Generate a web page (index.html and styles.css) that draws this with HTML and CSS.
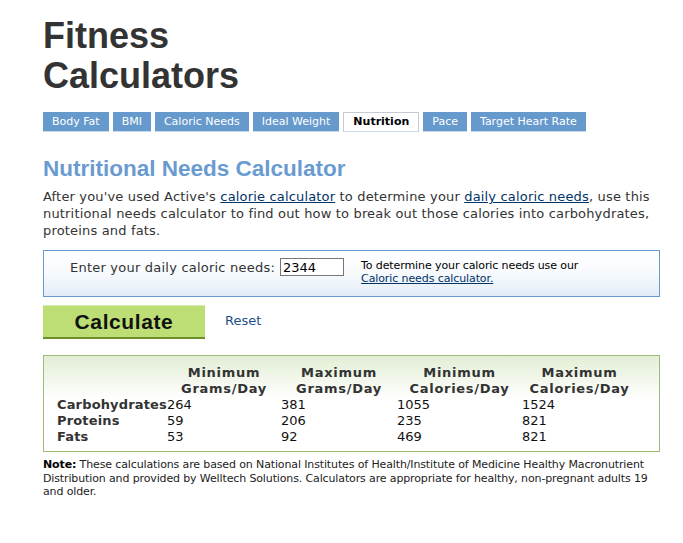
FILE: index.html
```html
<!DOCTYPE html>
<html>
<head>
<meta charset="utf-8">
<title>Fitness Calculators</title>
<link rel="stylesheet" href="styles.css">
</head>
<body>
<div class="page">
  <h1 class="title">Fitness<br>Calculators</h1>
  <ul class="tabs">
    <li class="tab">Body Fat</li>
    <li class="tab">BMI</li>
    <li class="tab">Caloric Needs</li>
    <li class="tab">Ideal Weight</li>
    <li class="tab active">Nutrition</li>
    <li class="tab">Pace</li>
    <li class="tab">Target Heart Rate</li>
  </ul>
  <h2 class="heading">Nutritional Needs Calculator</h2>
  <p class="intro">After you've used Active's <a href="#">calorie calculator</a> to determine your <a href="#">daily caloric needs</a>, use this nutritional needs calculator to find out how to break out those calories into carbohydrates, proteins and fats.</p>
  <div class="input-box">
    <label class="input-label">Enter your daily caloric needs:</label>
    <input class="cal-input" type="text" value="2344">
    <div class="hint">To determine your caloric needs use our<br><a href="#">Caloric needs calculator.</a></div>
  </div>
  <div class="actions">
    <button class="calc-btn">Calculate</button>
    <a class="reset" href="#">Reset</a>
  </div>
  <div class="results">
    <table class="res-table">
      <colgroup>
        <col class="c1"><col class="c2"><col class="c3"><col class="c4"><col class="c5">
      </colgroup>
      <tr class="head">
        <th></th>
        <th>Minimum<br>Grams/Day</th>
        <th>Maximum<br>Grams/Day</th>
        <th>Minimum<br>Calories/Day</th>
        <th>Maximum<br>Calories/Day</th>
      </tr>
      <tr><th class="rowh">Carbohydrates</th><td>264</td><td>381</td><td>1055</td><td>1524</td></tr>
      <tr><th class="rowh">Proteins</th><td>59</td><td>206</td><td>235</td><td>821</td></tr>
      <tr><th class="rowh">Fats</th><td>53</td><td>92</td><td>469</td><td>821</td></tr>
    </table>
  </div>
  <p class="note"><b>Note:</b> These calculations are based on National Institutes of Health/Institute of Medicine Healthy Macronutrient Distribution and provided by Welltech Solutions. Calculators are appropriate for healthy, non-pregnant adults 19 and older.</p>
</div>
</body>
</html>
```
FILE: styles.css
```css
html, body {
  margin: 0;
  padding: 0;
  background: #ffffff;
}
body {
  font-family: "DejaVu Sans", Verdana, sans-serif;
  font-size: 13px;
  color: #333333;
}
.page {
  width: 617px;
  padding: 0 0 0 43px;
}
.title {
  margin: 16px 0 0;
  font-family: "Liberation Sans", Arial, sans-serif;
  font-size: 36px;
  line-height: 40px;
  font-weight: bold;
  color: #333333;
}
.tabs {
  list-style: none;
  margin: 16px 0 0;
  padding: 0;
  display: flex;
  gap: 4px;
}
.tab {
  font-size: 11px;
  line-height: 19px;
  height: 19px;
  padding: 0 9px;
  background: #6699cc;
  color: #ffffff;
  border-bottom: 1px solid #c9d9ea;
}
.tab.active {
  background: #ffffff;
  color: #000000;
  font-weight: bold;
  border: 1px solid #c5cbd3;
  border-bottom: 1px solid #c9d9ea;
  height: 18px;
  line-height: 18px;
}
.heading {
  margin: 24px 0 0;
  font-family: "Liberation Sans", Arial, sans-serif;
  font-size: 22.5px;
  line-height: 26px;
  font-weight: bold;
  color: #6a9bd0;
}
.intro {
  margin: 6px 0 0;
  line-height: 17px;
  color: #333333;
  letter-spacing: 0.17px;
}
.intro a, .hint a {
  color: #003366;
  text-decoration: underline;
}
.input-box {
  margin-top: 11px;
  border: 1px solid #6a9bd0;
  background: linear-gradient(to bottom, #ffffff 0%, #f7fafd 50%, #e2ecf7 100%);
  display: flex;
  align-items: flex-start;
  padding: 7px 0 0 26px;
  box-sizing: border-box;
  height: 47px;
}
.input-label {
  line-height: 18px;
  color: #333333;
  margin-top: 1px;
  letter-spacing: 0.22px;
}
.cal-input {
  margin-left: 5px;
  width: 64px;
  height: 18px;
  box-sizing: border-box;
  border: 1px solid #777777;
  padding: 0 2px;
  font-family: "DejaVu Sans", Verdana, sans-serif;
  font-size: 13px;
  line-height: 16px;
  color: #000000;
}
.hint {
  margin-left: 17px;
  font-size: 11px;
  line-height: 13px;
  color: #000000;
  padding-top: 1px;
  letter-spacing: -0.1px;
}
.actions {
  margin-top: 8px;
  display: flex;
  align-items: center;
}
.calc-btn {
  width: 162px;
  height: 34px;
  background: #bddd75;
  border: none;
  border-top: 1px solid #d9ebb0;
  border-bottom: 2px solid #6d8f2b;
  font-family: "Liberation Sans", Arial, sans-serif;
  font-size: 21px;
  font-weight: bold;
  color: #111111;
  padding: 0;
  letter-spacing: 0.6px;
}
.reset {
  margin-left: 20px;
  color: #1d4f8a;
  text-decoration: none;
  font-size: 13px;
  margin-top: -4px;
}
.results {
  margin-top: 16px;
  border: 1px solid #9dbb79;
  background: linear-gradient(to bottom, #e2eed4 0%, #ffffff 45%, #ffffff 100%);
  padding: 9px 0 6px 13px;
}
.res-table {
  border-collapse: collapse;
  table-layout: fixed;
}
.res-table th, .res-table td {
  padding: 0;
  line-height: 16px;
  font-size: 13px;
  vertical-align: top;
}
.c1 { width: 110px; }
.c2 { width: 114px; }
.c3 { width: 116px; }
.c4 { width: 125px; }
.c5 { width: 115px; }
.head th {
  text-align: center;
  font-weight: bold;
  color: #333333;
  letter-spacing: 0.7px;
}
.rowh {
  text-align: left;
  font-weight: bold;
  color: #333333;
  white-space: nowrap;
  letter-spacing: 0.15px;
}
.res-table td {
  text-align: left;
  color: #111111;
}
.note {
  margin: 6px 0 0;
  font-family: "DejaVu Sans", Tahoma, sans-serif;
  font-size: 11px;
  line-height: 13.5px;
  color: #222222;
  letter-spacing: -0.13px;
}
.note b {
  color: #000000;
}
```
